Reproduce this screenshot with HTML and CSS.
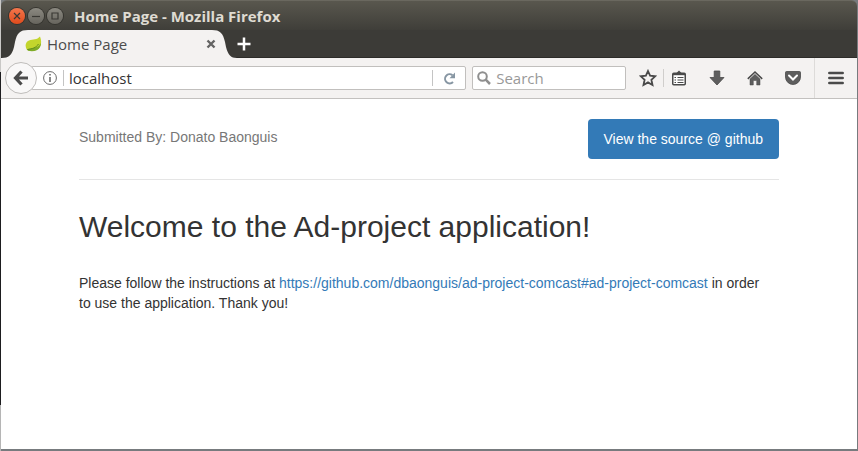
FILE: index.html
```html
<!DOCTYPE html>
<html lang="en">
<head>
<meta charset="utf-8">
<title>Home Page</title>
<link rel="stylesheet" href="styles.css">
</head>
<body>
<div class="window">
  <header class="titlebar">
    <button class="win-btn win-close" type="button" aria-label="Close"><svg width="16" height="16" viewBox="0 0 16 16"><path d="M5 5l6 6m0-6l-6 6"/></svg></button>
    <button class="win-btn" type="button" aria-label="Minimize"><svg width="16" height="16" viewBox="0 0 16 16"><path d="M4 8.500h8"/></svg></button>
    <button class="win-btn" type="button" aria-label="Maximize"><svg width="16" height="16" viewBox="0 0 16 16"><path d="M5 5h6v6H5z"/></svg></button>
    <span class="window-title">Home Page - Mozilla Firefox</span>
  </header>

  <div class="tabstrip">
    <div class="tab">
      <svg class="tab-shape" width="236" height="28" viewBox="0 0 236 28"><path d="M0 28C8 28 11 25 13 17L14 12C16 3 19 0 27 0H211C219 0 222 3 224 12L225 17C227 25 230 28 236 28Z" fill="#f4f2f1"/></svg>
      <svg class="leaf" width="17" height="16" viewBox="0 0 17 16"><path d="M15 .5C16.500 4 16.500 8 15 11C13 14.500 9 15 5 14.500L2 14C-.5 10 .5 6 4 4.500C8 3 12 4 15 .5Z" fill="#c3d52d"/><path d="M15.800 7C14.500 10 12 11.500 8 12L2 13.200L3 14.800C8 16 13 15 15 11Q16 9 15.800 7Z" fill="#7fab28"/><path d="M2.500 13.500C7 12.800 11 12 13.500 8" fill="none" stroke="#628c1c" stroke-width="1"/></svg>
      <span class="tab-label">Home Page</span>
      <button class="plain tab-close" type="button" aria-label="Close tab"><svg width="10" height="10" viewBox="0 0 10 10"><path d="M1.500 1.500l7 7m0-7l-7 7" stroke="#646464" stroke-width="2.400"/></svg></button>
    </div>
    <button class="plain new-tab" type="button" aria-label="New tab"><svg width="14" height="14" viewBox="0 0 14 14"><path d="M7 .5v13M.5 7h13" stroke="#fff" stroke-width="2.500"/></svg></button>
  </div>

  <nav class="toolbar">
    <button class="back" type="button" aria-label="Back"><svg width="16" height="16" viewBox="0 0 16 16"><path d="M8.500 1.500L2.500 8l6 6.500M3 8h12" fill="none" stroke="#4a4a4a" stroke-width="3.200"/></svg></button>
    <div class="urlbar">
      <svg width="14" height="14" viewBox="0 0 14 14"><circle cx="7" cy="7" r="6.400" fill="none" stroke="#6a6a6a"/><path d="M7 6v5M7 3v1.600" stroke="#6a6a6a" stroke-width="1.600"/></svg>
      <i class="url-sep"></i>
      <input class="url-input" type="text" value="localhost" aria-label="Address">
      <i class="url-sep"></i>
      <button class="plain reload" type="button" aria-label="Reload"><svg width="13" height="13" viewBox="0 0 13 13"><path d="M9.500 3.200A4.600 4.600 0 1 0 10 10" fill="none" stroke="#8796a3" stroke-width="2"/><path d="M12 .5V6.200H6.500Z" fill="#8796a3"/></svg></button>
    </div>
    <div class="search">
      <svg width="14" height="14" viewBox="0 0 14 14"><circle cx="5.500" cy="5.500" r="4.300" fill="none" stroke="#8f8f8f" stroke-width="2"/><path d="M8.700 8.700L13 13" stroke="#8f8f8f" stroke-width="2.500"/></svg>
      <input class="search-input" type="text" placeholder="Search" aria-label="Search">
    </div>
    <div class="tools">
      <button class="plain tool" type="button" aria-label="Bookmark"><svg width="18" height="18" viewBox="0 0 18 18"><path d="M9 2l2.100 4.700 5.100.6-3.800 3.500 1.100 5.200L9 13.400 4.500 16l1.100-5.200L1.800 7.300l5.100-.6z" fill="none" stroke="#4a4a4a" stroke-width="1.800"/></svg></button>
      <i class="tool-sep"></i>
      <button class="plain tool" type="button" aria-label="Bookmarks list"><svg width="16" height="16" viewBox="0 0 16 16"><rect x="1.750" y="3.250" width="12.500" height="11.500" rx="1" fill="#fff" stroke="#4a4a4a" stroke-width="1.500"/><path d="M4.500 4L8 .5 11.500 4v1h-7z" fill="#4a4a4a"/><path d="M2 4.500h12" stroke="#4a4a4a" stroke-width="1.400"/><path d="M3.500 7.500H5M6.500 7.500h6M3.500 10H5M6.500 10h6M3.500 12.500H5M6.500 12.500h6" stroke="#4a4a4a" stroke-width="1.200"/></svg></button>
      <button class="plain tool" type="button" aria-label="Downloads"><svg width="16" height="16" viewBox="0 0 16 16"><path d="M5.200 1h5.600v6.500H15L8 15 1 7.500h4.200z" fill="#5e5e5e" stroke="#4a4a4a" stroke-width=".8"/></svg></button>
      <button class="plain tool" type="button" aria-label="Home"><svg width="16" height="16" viewBox="0 0 16 16"><path d="M.8 8.800L8 2l7.200 6.800" fill="none" stroke="#4a4a4a" stroke-width="1.600"/><path d="M3 9l5-4.700L13 9v6H9.700v-4.500H6.300V15H3z" fill="#5e5e5e" stroke="#4a4a4a" stroke-width=".5"/></svg></button>
      <button class="plain tool" type="button" aria-label="Pocket"><svg width="16" height="16" viewBox="0 0 16 16"><path d="M1.500 1.500h13q1 0 1 1V7a7.500 7.500 0 0 1-15 0V2.500q0-1 1-1z" fill="#5e5e5e" stroke="#4a4a4a" stroke-width=".8"/><path d="M4 5.500L8 9.500l4-4" fill="none" stroke="#fff" stroke-width="2" stroke-linecap="round"/></svg></button>
    </div>
    <div class="menu-area">
      <button class="plain tool" type="button" aria-label="Menu"><svg width="16" height="14" viewBox="0 0 16 14"><path d="M1.300 2h13.400M1.300 7h13.400M1.300 12h13.400" stroke="#4a4a4a" stroke-width="2.500" stroke-linecap="round"/></svg></button>
    </div>
  </nav>

  <div class="page">
    <div class="container">
      <div class="masthead">
        <span class="author">Submitted By: Donato Baonguis</span>
        <a class="btn" href="#">View the source @ github</a>
      </div>
      <h1>Welcome to the Ad-project application!</h1>
      <p>Please follow the instructions at <a href="#">https://github.com/dbaonguis/ad-project-comcast#ad-project-comcast</a> in order to use the application. Thank you!</p>
    </div>
  </div>
</div>
</body>
</html>
```
FILE: styles.css
```css
* { box-sizing: border-box; }

body {
  margin: 0;
  min-height: 100vh;
  display: flex;
  padding: 0 1px 2px;
  background:
    linear-gradient(#c9c8c6 0 72px, #1d1d1f 72px 405px, #b5b5b5 405px) left / 1px 100% no-repeat,
    #777b7e;
  font-family: "Open Sans", "Noto Sans", sans-serif;
}

svg { display: block; }

.window {
  flex: 1;
  display: flex;
  flex-direction: column;
  min-width: 0;
}

.titlebar {
  display: flex;
  align-items: center;
  gap: 3px;
  height: 30px;
  padding: 0 8px;
  border-top: 1px solid #6a685f;
  border-radius: 6px 6px 0 0;
  background: linear-gradient(#59574e, #3f3e39);
}

.win-btn {
  width: 16px;
  height: 16px;
  padding: 0;
  border: 0;
  border-radius: 50%;
  background: linear-gradient(#8b8981, #67655e);
  box-shadow: 0 0 0 1px #35342f;
}
.win-btn path { fill: none; stroke: #3a3934; stroke-width: 1.2; }
.win-close { background: linear-gradient(#f4764c, #df4b1c); }

.window-title {
  margin-left: 8px;
  color: #dfdbd2;
  font-size: 15px;
  line-height: 20px;
  font-weight: 700;
}

.plain {
  display: flex;
  align-items: center;
  justify-content: center;
  padding: 0;
  border: 0;
  background: none;
}

.tabstrip {
  display: flex;
  height: 28px;
  background: #3c3b37;
  border-bottom: 1px solid #2d2c29;
}

.tab {
  position: relative;
  display: flex;
  align-items: center;
  width: 236px;
  height: 28px;
  padding: 0 21px 0 24px;
}
.tab-shape { position: absolute; top: 0; left: 0; }
.leaf, .tab-label, .tab-close { position: relative; }
.tab-label {
  flex: 1;
  margin-left: 5px;
  color: #4c4c4c;
  font-size: 15px;
  line-height: 20px;
}
.new-tab { width: 14px; }

.toolbar {
  display: flex;
  align-items: center;
  height: 41px;
  padding-left: 4px;
  background: #f4f2f1;
  border-bottom: 1px solid #c3c1bf;
}

.back {
  position: relative;
  display: flex;
  align-items: center;
  justify-content: center;
  width: 32px;
  height: 32px;
  padding: 0;
  border: 1px solid #bfbdbb;
  border-radius: 50%;
  background: #f9f8f8;
}

.urlbar, .search {
  display: flex;
  align-items: center;
  height: 24px;
  border: 1px solid #c1bfbd;
  border-radius: 2px;
  background: #fff;
}
.urlbar {
  flex: 437 1 0;
  min-width: 0;
  margin-left: -6px;
  padding-left: 11px;
}
.url-sep {
  width: 1px;
  height: 16px;
  margin-left: 6px;
  background: #c4c4c4;
}
.url-input, .search-input {
  flex: 1;
  min-width: 0;
  padding: 0 0 0 5px;
  border: 0;
  outline: 0;
  background: none;
  color: #333;
  font: 15px "Open Sans", "Noto Sans", sans-serif;
}
.reload { width: 32px; }

.search {
  flex: 153 1 0;
  min-width: 0;
  margin-left: 6px;
  padding-left: 4px;
}
.search-input::placeholder { color: #999; opacity: 1; }

.tools {
  display: flex;
  align-items: center;
  gap: 22px;
  margin: 0 13px;
}
.tools .tool:first-child { margin-right: -16px; }
.tool-sep {
  width: 1px;
  height: 18px;
  margin-right: -15px;
  background: #d0cecc;
}

.menu-area {
  display: flex;
  align-items: center;
  justify-content: center;
  align-self: stretch;
  width: 43px;
  border-left: 1px solid #dddbd9;
}

.page {
  flex: 1;
  padding: 20px;
  background: #fff;
  color: #333;
  font: 14px/20px "Liberation Sans", Arial, sans-serif;
}
.container { max-width: 700px; margin: 0 auto; }

.masthead {
  display: flex;
  justify-content: space-between;
  align-items: flex-start;
  padding-bottom: 20px;
  border-bottom: 1px solid #e5e5e5;
}
.author { padding-top: 8px; color: #777; }

a { color: #337ab7; text-decoration: none; }
.btn {
  padding: 10px 16px;
  border-radius: 4px;
  background: #337ab7;
  color: #fff;
}

h1 {
  margin: 30px 0;
  font-size: 30px;
  line-height: 33px;
  font-weight: 400;
}
p { margin: 0; padding-right: 10px; }
```
